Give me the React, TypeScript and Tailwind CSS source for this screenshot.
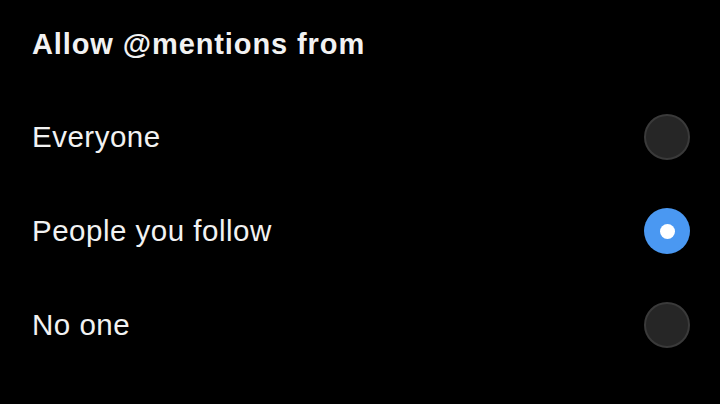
import React from "react";

const options = [
  { label: "Everyone", selected: false },
  { label: "People you follow", selected: true },
  { label: "No one", selected: false },
];

function Radio({ selected }: { selected: boolean }) {
  if (selected) {
    return (
      <div className="flex h-[46px] w-[46px] items-center justify-center rounded-full bg-[#4a98f2]">
        <div className="h-[15px] w-[15px] rounded-full bg-white" />
      </div>
    );
  }
  return <div className="h-[46px] w-[46px] rounded-full border-2 border-[#3a3a3a] bg-[#262626]" />;
}

export default function App() {
  return (
    <div
      className="h-[404px] w-[720px] overflow-hidden bg-black text-[#f2f2f2]"
      style={{ fontFamily: '"Liberation Sans", Arial, sans-serif' }}
    >
      <div className="flex h-[88px] items-center pl-[32px]">
        <h2 className="text-[29px] font-bold leading-none tracking-[0.9px]">Allow @mentions from</h2>
      </div>
      <div className="pt-[2px]">
        {options.map((o) => (
          <div key={o.label} className="flex h-[94px] items-center justify-between pl-[32px] pr-[30px]">
            <span className="text-[29.5px] leading-none tracking-[0.5px]">{o.label}</span>
            <Radio selected={o.selected} />
          </div>
        ))}
      </div>
    </div>
  );
}
